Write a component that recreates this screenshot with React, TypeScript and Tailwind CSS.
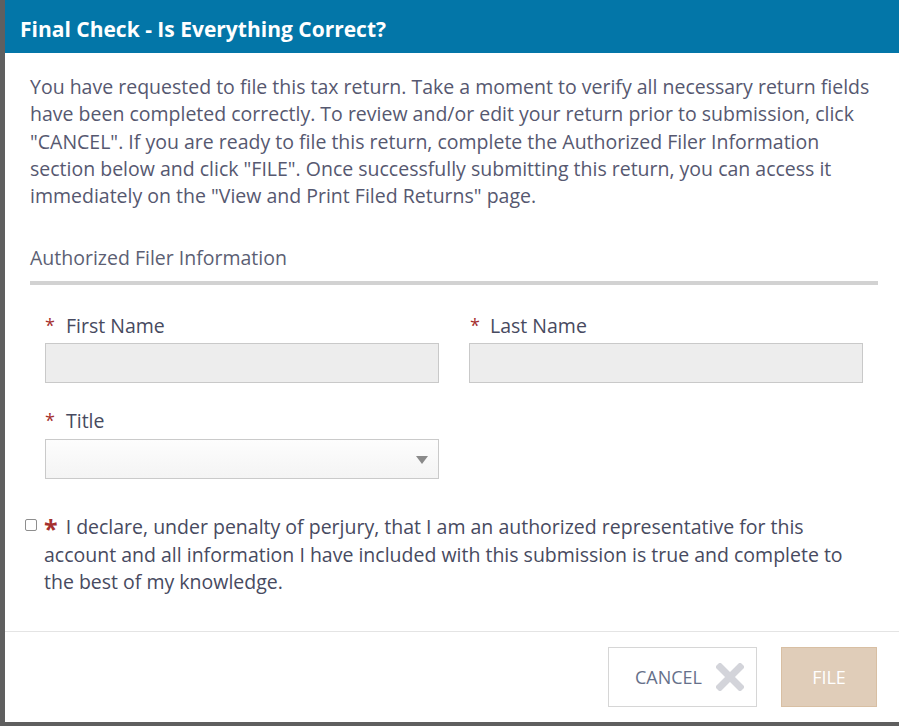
import { useState } from 'react';

export default function App() {
  const [agreed, setAgreed] = useState(false);

  return (
    <div className="w-[899px] h-[726px] overflow-hidden bg-[#5f5f5f] pl-[5px] pb-[4px]" style={{ fontFamily: '"Open Sans", "Liberation Sans", sans-serif' }}>
      <div className="h-full w-[900px] bg-white flex flex-col">
        {/* Header */}
        <div className="h-[53px] shrink-0 bg-[#0376a8] flex items-center pl-[15px] pt-[6px]">
          <h1 className="text-[21px] font-bold text-white">Final Check - Is Everything Correct?</h1>
        </div>

        {/* Body */}
        <div className="pl-[25px] pr-[22px] pt-[20px] text-[#565870]">
          <p className="text-[19.5px] leading-[27.25px] w-[850px]">
            You have requested to file this tax return. Take a moment to verify all necessary return fields have been completed correctly. To review and/or edit your return prior to submission, click "CANCEL". If you are ready to file this return, complete the Authorized Filer Information section below and click "FILE". Once successfully submitting this return, you can access it immediately on the "View and Print Filed Returns" page.
          </p>

          <div className="w-[848px]">
            <h2 className="mt-[35px] text-[19.5px] leading-[27px] text-[#5c5f74]">Authorized Filer Information</h2>
            <div className="mt-[10px] h-[4px] bg-[#d2d2d2]" />

            <div className="px-[15px] pt-[27px]">
              <div className="grid grid-cols-2 gap-x-[30px]">
                <div>
                  <label className="flex items-center text-[19.5px] leading-[27px] text-[#474a60]">
                    <span className="text-[#a5302e] w-[21px] text-[18px]">*</span>First Name
                  </label>
                  <input className="mt-[4px] block w-full h-[40px] bg-[#ededed] border border-[#c9c9c9] outline-none px-2" />
                </div>
                <div>
                  <label className="flex items-center text-[19.5px] leading-[27px] text-[#474a60]">
                    <span className="text-[#a5302e] w-[21px] text-[18px] pl-[1px]">*</span>Last Name
                  </label>
                  <input className="mt-[4px] block w-full h-[40px] bg-[#ededed] border border-[#c9c9c9] outline-none px-2" />
                </div>
                <div className="mt-[24px]">
                  <label className="flex items-center text-[19.5px] leading-[27px] text-[#474a60]">
                    <span className="text-[#a5302e] w-[21px] text-[18px]">*</span>Title
                  </label>
                  <div className="mt-[5px] relative h-[40px] border border-[#cacaca] bg-gradient-to-b from-[#fdfdfd] to-[#f4f4f4]">
                    <svg className="absolute right-[10px] top-[16px]" width="12" height="8" viewBox="0 0 12 8">
                      <path d="M0 0 L12 0 L6 8 Z" fill="#8a8a8a" />
                    </svg>
                  </div>
                </div>
              </div>
            </div>

            {/* Declaration */}
            <div className="mt-[34px] -ml-[5px] flex items-start">
              <input
                type="checkbox"
                checked={agreed}
                onChange={(e) => setAgreed(e.target.checked)}
                className="mt-[6px] w-[12px] h-[12px] shrink-0 appearance-none rounded-[2px] border border-[#8e8e8e] bg-white"
              />
              <p className="ml-[7px] text-[19.5px] leading-[27.5px] text-[#474a60] w-[822px]">
                <span className="inline-block text-[#a5302e] font-bold text-[25px] leading-[20px] mr-[8px] align-[-4px]">*</span>I declare, under penalty of perjury, that I am an authorized representative for this account and all information I have included with this submission is true and complete to the best of my knowledge.
              </p>
            </div>
          </div>
        </div>

        <div className="flex-1" />

        {/* Footer */}
        <div className="border-t border-[#e4e4e4] h-[91px] shrink-0 flex items-start justify-end gap-[24px] pt-[15px] pr-[28px]">
          <button className="w-[149px] h-[60px] border border-[#d6d6d6] bg-white flex items-center justify-end pr-[12px] gap-[14px] text-[18px] text-[#66708a]">
            CANCEL
            <svg width="28" height="28" viewBox="0 0 28 28">
              <path d="M4 4 L24 24 M24 4 L4 24" stroke="#d3d4da" strokeWidth="7" strokeLinecap="square" />
            </svg>
          </button>
          <button className="w-[96px] h-[60px] border border-[#d8bfa3] bg-[#e0cdb9] text-white text-[18px]">FILE</button>
        </div>
      </div>
    </div>
  );
}
